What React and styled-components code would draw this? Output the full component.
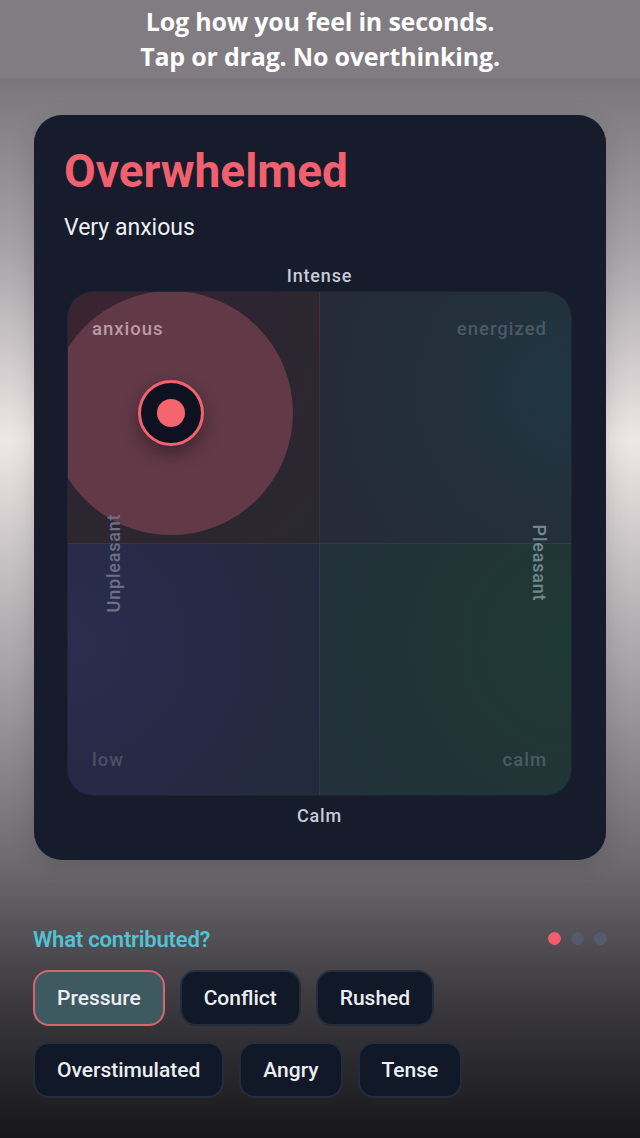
import React, { useState } from 'react'
import styled, { createGlobalStyle } from 'styled-components'

const GlobalStyle = createGlobalStyle`
  html, body {
    margin: 0;
    padding: 0;
    background: #141419;
  }
  * {
    box-sizing: border-box;
  }
`;

const Page = styled.div`
  width: 640px;
  min-height: 1138px;
  display: flex;
  flex-direction: column;
  font-family: Roboto, "Liberation Sans", sans-serif;
  background: linear-gradient(180deg,
    #807c81 0px,
    #807c81 78px,
    #79767b 78px,
    #a7a3a6 250px,
    #eee7e8 440px,
    #c4bfc1 570px,
    #8b888c 760px,
    #6a686d 870px,
    #3f3d42 990px,
    #16161b 1138px);
`;

const Banner = styled.header`
  height: 78px;
  padding-top: 4px;
  text-align: center;
  color: #ffffff;
  font-family: "Open Sans", "Noto Sans", sans-serif;
  font-weight: 700;
  font-size: 25px;
  line-height: 35px;
  letter-spacing: -0.2px;
`;

const Card = styled.section`
  margin: 37px 34px 0;
  height: 745px;
  border-radius: 28px;
  background: #161c2b;
  padding: 29px 34px 0 33px;
  display: flex;
  flex-direction: column;
  box-shadow: 0 6px 24px rgba(0, 0, 0, 0.14);
`;

const Title = styled.h1`
  margin: 0 0 0 -3px;
  font-size: 46px;
  line-height: 54px;
  font-weight: 700;
  color: #f0606e;
`;

const Subtitle = styled.div`
  margin: 16px 0 0 -3px;
  font-size: 23px;
  line-height: 28px;
  color: #eef0f4;
`;

const AxisLabel = styled.div`
  text-align: center;
  font-size: 18px;
  line-height: 22px;
  font-weight: 500;
  letter-spacing: 0.8px;
  color: #c7cbd6;
  margin-top: ${p => p.$top}px;
`;

const Grid = styled.div`
  position: relative;
  margin-top: 4px;
  width: 505px;
  height: 505px;
  border-radius: 26px;
  overflow: hidden;
  display: grid;
  grid-template-columns: 1fr 1fr;
  grid-template-rows: 1fr 1fr;
  border: 1px solid rgba(255, 255, 255, 0.04);
  box-shadow: inset 0 -26px 26px -12px rgba(18, 22, 36, 0.6);
`;

const quadrantBg = {
  tl: 'radial-gradient(circle at 0% 0%, #3d2431 0%, #2e2532 45%, #29282f 100%)',
  tr: 'radial-gradient(circle at 100% 40%, #1f3741 0%, #232f3b 45%, #262b38 100%)',
  bl: 'radial-gradient(circle at 0% 40%, #2b2d50 0%, #272a46 45%, #222a3b 100%)',
  br: 'radial-gradient(circle at 100% 40%, #1f3a36 0%, #213436 50%, #22303a 100%)',
};

const Quadrant = styled.div`
  position: relative;
  background: ${p => quadrantBg[p.$pos]};
  border-right: ${p => (p.$pos === 'tl' || p.$pos === 'bl') ? '1px solid rgba(255,255,255,0.05)' : 'none'};
  border-bottom: ${p => (p.$pos === 'tl' || p.$pos === 'tr') ? '1px solid rgba(255,255,255,0.06)' : 'none'};
  display: flex;
  flex-direction: column;
  justify-content: ${p => (p.$pos === 'tl' || p.$pos === 'tr') ? 'flex-start' : 'flex-end'};
  align-items: ${p => (p.$pos === 'tl' || p.$pos === 'bl') ? 'flex-start' : 'flex-end'};
  padding: ${p => (p.$pos === 'tl' || p.$pos === 'tr') ? '26px 24px 0' : '0 24px 24px'};
`;

const CornerLabel = styled.span`
  position: relative;
  z-index: 2;
  font-size: 18.5px;
  line-height: 22px;
  font-weight: 500;
  letter-spacing: 1px;
  color: ${p => p.$color};
`;

const SideLabel = styled.span`
  position: absolute;
  z-index: 2;
  top: 271px;
  left: ${p => p.$left}px;
  font-size: 18px;
  line-height: 20px;
  font-weight: 500;
  letter-spacing: 0.8px;
  color: ${p => p.$color};
  transform: translate(-50%, -50%) rotate(${p => p.$deg}deg);
  white-space: nowrap;
`;

const Halo = styled.div`
  position: absolute;
  z-index: 1;
  left: ${p => p.$x - 122}px;
  top: ${p => p.$y - 122}px;
  width: 244px;
  height: 244px;
  border-radius: 50%;
  background: #623a47;
`;

const Marker = styled.div`
  position: absolute;
  z-index: 3;
  left: ${p => p.$x - 33}px;
  top: ${p => p.$y - 33}px;
  width: 66px;
  height: 66px;
  border-radius: 50%;
  border: 3px solid #f0636f;
  background: #0e1220;
  display: flex;
  align-items: center;
  justify-content: center;
  box-shadow: 0 8px 18px rgba(20, 10, 20, 0.45);
`;

const MarkerDot = styled.div`
  width: 28px;
  height: 28px;
  border-radius: 50%;
  background: #f6646f;
`;

const Contributors = styled.section`
  margin-top: 68px;
  padding: 0 33px;
  display: flex;
  flex-direction: column;
`;

const SectionHead = styled.div`
  display: flex;
  align-items: center;
  justify-content: space-between;
`;

const SectionTitle = styled.h2`
  margin: 0;
  font-size: 22px;
  line-height: 24px;
  font-weight: 600;
  letter-spacing: -0.2px;
  color: #52c3d3;
`;

const Dots = styled.div`
  display: flex;
  gap: 10px;
  margin-top: -4px;
`;

const Dot = styled.span`
  width: 13px;
  height: 13px;
  border-radius: 50%;
  background: ${p => (p.$active ? '#f45d6c' : '#565a6e')};
`;

const Chips = styled.div`
  margin-top: 18px;
  display: flex;
  flex-wrap: wrap;
  gap: 16px 15px;
  width: 480px;
`;

const Chip = styled.button`
  height: 56px;
  padding: 0 22px;
  border-radius: 16px;
  font-family: Roboto, "Liberation Sans", sans-serif;
  font-size: 21px;
  font-weight: 500;
  color: #eceef2;
  background: ${p => (p.$selected ? '#3e5a60' : '#111827')};
  border: 2px solid ${p => (p.$selected ? '#d5666f' : '#252d3c')};
  cursor: pointer;
`;

const tags = [
  ['Pressure', 'Conflict', 'Rushed'],
  ['Overstimulated', 'Angry', 'Tense'],
];

export default function App() {
  const [selected, setSelected] = useState(['Pressure']);
  const point = { x: 103, y: 121 };

  const toggle = (t) =>
    setSelected(s => (s.includes(t) ? s.filter(x => x !== t) : [...s, t]));

  return (
    <Page>
      <GlobalStyle />
      <Banner>
        Log how you feel in seconds.<br />
        Tap or drag. No overthinking.
      </Banner>

      <Card>
        <Title>Overwhelmed</Title>
        <Subtitle>Very anxious</Subtitle>
        <AxisLabel $top={23}>Intense</AxisLabel>
        <Grid>
          <Halo $x={point.x} $y={point.y} />
          <Quadrant $pos="tl">
            <CornerLabel $color="#bd9aa5">anxious</CornerLabel>
          </Quadrant>
          <Quadrant $pos="tr">
            <CornerLabel $color="#4a5966">energized</CornerLabel>
          </Quadrant>
          <Quadrant $pos="bl">
            <CornerLabel $color="#4b5064">low</CornerLabel>
          </Quadrant>
          <Quadrant $pos="br">
            <CornerLabel $color="#4a5c62">calm</CornerLabel>
          </Quadrant>
          <SideLabel $left={46} $deg={-90} $color="#6d7086">Unpleasant</SideLabel>
          <SideLabel $left={471} $deg={90} $color="#6f8a8c">Pleasant</SideLabel>
          <Marker $x={point.x} $y={point.y}>
            <MarkerDot />
          </Marker>
        </Grid>
        <AxisLabel $top={9}>Calm</AxisLabel>
      </Card>

      <Contributors>
        <SectionHead>
          <SectionTitle>What contributed?</SectionTitle>
          <Dots>
            <Dot $active />
            <Dot />
            <Dot />
          </Dots>
        </SectionHead>
        <Chips>
          {tags.flat().map(t => (
            <Chip key={t} $selected={selected.includes(t)} onClick={() => toggle(t)}>
              {t}
            </Chip>
          ))}
        </Chips>
      </Contributors>
    </Page>
  );
}
